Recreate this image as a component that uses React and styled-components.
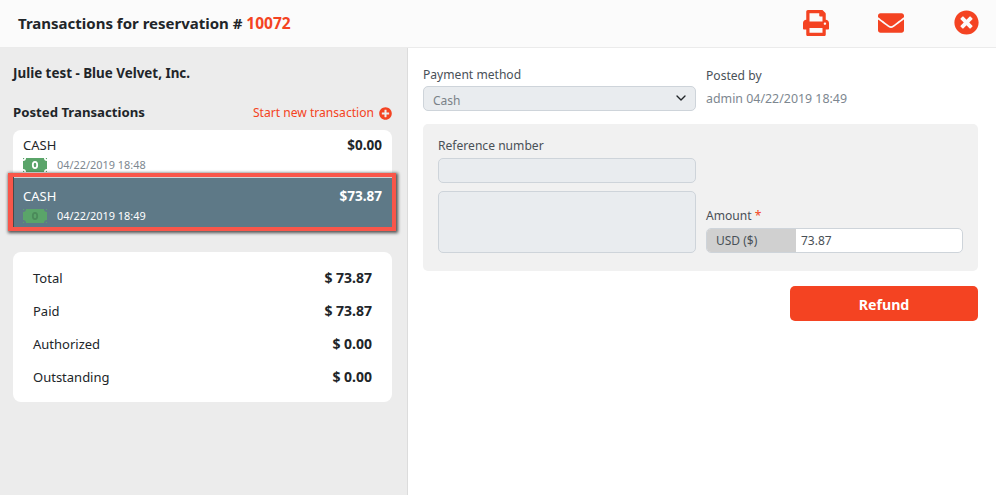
import React from 'react';
import styled, { createGlobalStyle } from 'styled-components';
import { FaPrint, FaEnvelope, FaTimesCircle, FaPlusCircle } from 'react-icons/fa';
import { FiChevronDown } from 'react-icons/fi';

const Global = createGlobalStyle`
html, body {
  margin: 0;
  padding: 0;
  background: #fff;
}
* {
  box-sizing: border-box;
}
body {
  font-family: "Noto Sans", "Open Sans", sans-serif;
  color: #212529;
}
`;

const Page = styled.div`
width: 996px;
height: 495px;
display: flex;
flex-direction: column;
overflow: hidden;
`;

const Header = styled.header`
height: 48px;
flex: none;
display: flex;
align-items: center;
background: #fbfbfb;
border-bottom: 1px solid #ebebeb;
padding: 0 18px 2px;
`;

const Title = styled.h1`
flex: 1;
margin: 0;
font-size: 15px;
font-weight: 700;
color: #212529;
span { color: #f44322; font-size: 15.5px; }
`;

const Actions = styled.div`
display: flex;
align-items: center;
gap: 35px;
color: #f44322;
margin-right: -8px;
`;

const ActionSlot = styled.div`
width: 40px;
display: flex;
justify-content: center;
font-size: ${p => p.$size}px;
line-height: 0;
`;

const Body = styled.div`
flex: 1;
display: flex;
min-height: 0;
`;

const Left = styled.aside`
width: 408px;
flex: none;
background: #ececec;
border-right: 1px solid #dcdcdc;
padding: 16px 15px 0 13px;
`;

const Guest = styled.div`
font-size: 13.4px;
font-weight: 700;
line-height: 18px;
`;

const ListHead = styled.div`
display: flex;
justify-content: space-between;
align-items: center;
margin-top: 19px;
height: 22px;
`;

const ListTitle = styled.div`
font-size: 13.2px;
font-weight: 700;
`;

const NewLink = styled.a`
display: flex;
align-items: center;
gap: 5px;
font-size: 12.1px;
color: #f44322;
svg { font-size: 13px; margin-top: 3px; }
`;

const List = styled.div`
margin-top: 7px;
background: #fff;
border-radius: 8px 8px 0 0;
`;

const Item = styled.div`
position: relative;
height: ${p => p.$selected ? '58px' : '43px'};
padding: ${p => p.$selected ? '9px 10px 0' : '5px 10px 0'};
color: ${p => p.$selected ? '#fff' : '#212529'};
background: ${p => p.$selected ? '#5e7987' : 'transparent'};
overflow: hidden;
${p => p.$selected && `
  margin: 0 -4px 0 -5px;
  width: 388px;
  border: 4px solid #f9564a;
  border-left-width: 5px;
  box-shadow: 1px 1px 3px 1px rgba(0, 0, 0, 0.65), inset 1px 0 0 #4a4a4a, inset 0 1px 0 #cfd4d6;
  overflow: visible;
`}
`;

const ItemTop = styled.div`
display: flex;
justify-content: space-between;
align-items: center;
height: 20px;
font-size: 13px;
line-height: 20px;
`;

const Price = styled.b`
font-size: 13.5px;
font-weight: 700;
`;

const ItemBottom = styled.div`
display: flex;
align-items: center;
gap: 10px;
height: 14px;
margin-top: 2px;
font-size: 10.9px;
color: ${p => p.$selected ? '#fff' : '#7d8790'};
svg { flex: none; margin-top: 2px; }
`;

const Summary = styled.div`
margin-top: 21px;
background: #fff;
border-radius: 8px;
padding: 9px 20px;
`;

const SummaryRow = styled.div`
display: flex;
justify-content: space-between;
align-items: center;
height: 33px;
font-size: 13px;
b { font-size: 14px; font-weight: 700; }
`;

const Right = styled.main`
flex: 1;
padding: 18px 18px 0 15px;
`;

const TopGrid = styled.div`
display: grid;
grid-template-columns: 273px 1fr;
column-gap: 10px;
`;

const Label = styled.div`
font-size: 12.1px;
line-height: 18px;
color: #495057;
margin-bottom: ${p => p.$gap || 0}px;
em { font-style: normal; color: #f44322; }
`;

const Field = styled.div`
background: #e9ecef;
border: 1px solid #ced4da;
border-radius: 5px;
height: ${p => p.$h || 25}px;
`;

const SelectBox = styled(Field)`
display: flex;
align-items: center;
justify-content: space-between;
padding: 3px 6px 0 9px;
font-size: 12px;
color: #7a8288;
svg { color: #212529; font-size: 16px; margin-top: -4px; }
`;

const PostedCol = styled.div`
padding-top: 1px;
`;

const PostedBy = styled.div`
font-size: 12.4px;
line-height: 18px;
color: #7d8790;
margin-top: 5px;
`;

const Panel = styled.section`
margin-top: 13px;
height: 147px;
background: #f1f1f1;
border-radius: 5px;
padding: 13px 15px 0;
display: grid;
grid-template-columns: 258px 257px;
column-gap: 10px;
align-content: start;
`;

const LeftStack = styled.div`
display: flex;
flex-direction: column;
gap: 8px;
`;

const AmountCol = styled.div`
align-self: end;
`;

const AmountGroup = styled.div`
display: flex;
height: 25px;
background: #fff;
border: 1px solid #ced4da;
border-radius: 5px;
overflow: hidden;
font-size: 12px;
`;

const Currency = styled.div`
width: 90px;
margin: -1px 0 -1px -1px;
background: #d0d0d0;
color: #495057;
display: flex;
align-items: center;
padding-left: 10px;
`;

const AmountValue = styled.div`
flex: 1;
display: flex;
align-items: center;
padding-left: 5px;
color: #495057;
`;

const Footer = styled.div`
display: flex;
justify-content: flex-end;
margin-top: 15px;
`;

const RefundButton = styled.button`
width: 188px;
height: 35px;
border: 0;
border-radius: 5px;
padding: 2px 0 0;
background: #f44322;
color: #fff;
font-family: inherit;
font-size: 14.2px;
font-weight: 700;
`;

// green bill icon, corners are notched with a small dot left in each notch
const Bill = ({ dim }) => {
  const cut = dim ? '#5e7987' : '#fff';
  const corners = [[0, 0], [24, 0], [0, 14], [24, 14]];
  return (
    <svg width="24" height="14" viewBox="0 0 24 14">
      <rect width="24" height="14" fill="#5aa469" />
      {corners.map(([x, y]) => (
        <g key={`${x}-${y}`}>
          <circle cx={x} cy={y} r="3" fill={cut} />
          <circle cx={x} cy={y} r="1.3" fill="#5aa469" />
        </g>
      ))}
      <ellipse cx="12" cy="7" rx="2.2" ry="3.2" fill="none" stroke={dim ? '#4b8a5a' : '#fff'} strokeWidth="1.8" />
    </svg>
  );
};

const totals = [
  ['Total', '$ 73.87'],
  ['Paid', '$ 73.87'],
  ['Authorized', '$ 0.00'],
  ['Outstanding', '$ 0.00'],
];

export default function App() {
  return (
    <Page>
      <Global />
      <Header>
        <Title>Transactions for reservation # <span>10072</span></Title>
        <Actions>
          <ActionSlot $size={26}><FaPrint /></ActionSlot>
          <ActionSlot $size={26}><FaEnvelope /></ActionSlot>
          <ActionSlot $size={25}><FaTimesCircle /></ActionSlot>
        </Actions>
      </Header>
      <Body>
        <Left>
          <Guest>Julie test - Blue Velvet, Inc.</Guest>
          <ListHead>
            <ListTitle>Posted Transactions</ListTitle>
            <NewLink>Start new transaction <FaPlusCircle /></NewLink>
          </ListHead>
          <List>
            <Item>
              <ItemTop>CASH<Price>$0.00</Price></ItemTop>
              <ItemBottom><Bill />04/22/2019 18:48</ItemBottom>
            </Item>
            <Item $selected>
              <ItemTop>CASH<Price>$73.87</Price></ItemTop>
              <ItemBottom $selected><Bill dim />04/22/2019 18:49</ItemBottom>
            </Item>
          </List>
          <Summary>
            {totals.map(([name, value]) => (
              <SummaryRow key={name}>{name}<b>{value}</b></SummaryRow>
            ))}
          </Summary>
        </Left>
        <Right>
          <TopGrid>
            <div>
              <Label $gap={2}>Payment method</Label>
              <SelectBox>Cash <FiChevronDown /></SelectBox>
            </div>
            <PostedCol>
              <Label>Posted by</Label>
              <PostedBy>admin 04/22/2019 18:49</PostedBy>
            </PostedCol>
          </TopGrid>
          <Panel>
            <LeftStack>
              <div>
                <Label $gap={3}>Reference number</Label>
                <Field />
              </div>
              <Field $h={62} />
            </LeftStack>
            <AmountCol>
              <Label $gap={3}>Amount <em>*</em></Label>
              <AmountGroup>
                <Currency>USD ($)</Currency>
                <AmountValue>73.87</AmountValue>
              </AmountGroup>
            </AmountCol>
          </Panel>
          <Footer>
            <RefundButton>Refund</RefundButton>
          </Footer>
        </Right>
      </Body>
    </Page>
  );
}
